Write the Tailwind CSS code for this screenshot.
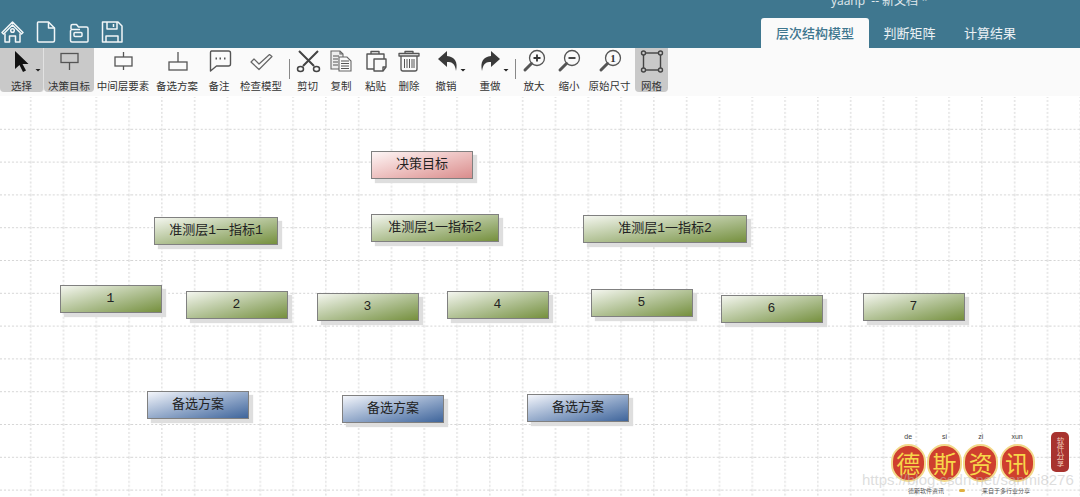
<!DOCTYPE html>
<html lang="zh-CN">
<head>
<meta charset="UTF-8">
<title>yaahp</title>
<script src="https://cdn.jsdelivr.net/npm/@tailwindcss/browser@4"></script>
</head>
<body class="w-[1080px] h-[497px] overflow-hidden bg-white font-['Noto_Sans_CJK_SC',sans-serif] text-[#333]">

<!-- Title bar -->
<header class="relative h-[48px] bg-[#3f778f] flex items-end overflow-hidden">
  <div class="absolute top-[-7px] left-[831px] text-[12px] leading-[16px] text-white/85 whitespace-pre font-['Open_Sans','Noto_Sans_CJK_SC',sans-serif]">yaahp  -- 新文档 *</div>

  <div class="flex items-center h-[30px] mb-0 pl-[1px]">
    <svg class="w-[24px] h-[24px] mt-[-2px]" viewBox="0 0 24 24" fill="none" stroke="#f2f6f8" stroke-width="1.5" stroke-linejoin="round" stroke-linecap="round">
      <path d="M1 12.5 11.5 2 22 12.5 20.5 14 11.5 5 2.5 14Z"/>
      <path d="M4 14v8h4.5v-6h6v6H19v-8"/>
      <circle cx="11.5" cy="10.5" r="1.8"/>
    </svg>
    <svg class="w-[20px] h-[22px] ml-[11px] mt-[-2px]" viewBox="0 0 20 22" fill="none" stroke="#f2f6f8" stroke-width="1.5" stroke-linejoin="round">
      <path d="M2 1h10.5L18.5 7v12.5a1.5 1.5 0 0 1-1.500 1.500H3a1.500 1.500 0 0 1-1.500-1.500V2.500A1.500 1.500 0 0 1 2 1Z"/>
      <path d="M12.500 1v6h6"/>
    </svg>
    <svg class="w-[22px] h-[20px] ml-[13px] mt-[-1px]" viewBox="0 0 22 20" fill="none" stroke="#f2f6f8" stroke-width="1.500" stroke-linejoin="round">
      <path d="M2 6V3a1.500 1.500 0 0 1 1.500-1.500h4l2 2.500h8a1.500 1.500 0 0 1 1.500 1.500V18a1 1 0 0 1-1 1H3a1.500 1.500 0 0 1-1.500-1.500V8A1.500 1.500 0 0 1 3 6.500h8"/>
      <rect x="5" y="9.500" width="8" height="4" rx="1"/>
    </svg>
    <svg class="w-[22px] h-[22px] ml-[10px] mt-[-2px]" viewBox="0 0 22 22" fill="none" stroke="#f2f6f8" stroke-width="1.500" stroke-linejoin="round">
      <path d="M1.500 1h15.500l4 4v16H1.500Z"/>
      <path d="M6 1v7h10V1M12.500 3v3"/>
      <path d="M5 21v-6h12v6"/>
    </svg>
  </div>

  <nav class="absolute left-[761px] bottom-0 flex items-stretch h-[30px] text-[13px]">
    <div class="w-[108px] flex items-center justify-center rounded-t-[3px] bg-[#fafafa] text-[#3f778f] font-medium">层次结构模型</div>
    <div class="w-[81px] flex items-center justify-center text-white/90">判断矩阵</div>
    <div class="w-[80px] flex items-center justify-center text-white/90">计算结果</div>
  </nav>
</header>

<!-- Toolbar -->
<div class="flex items-start h-[48px] bg-[#fafafa] text-[10.5px] leading-[14px]">

  <div class="w-[44px] h-[44px] flex flex-col items-center bg-[#c9c9c9] rounded-b-sm border-r border-[#e2e2e2]">
    <svg class="w-[44px] h-[29px] shrink-0" viewBox="0 0 44 29"><path d="M15 3v18l4.500-4 3.500 7 3-1.500-3.500-6.500h6Z" fill="#111"/><path d="M35.500 21h5l-2.500 2.500Z" fill="#222"/></svg>
    <span class="mt-[2px]">选择</span>
  </div>

  <div class="w-[50px] h-[44px] flex flex-col items-center bg-[#c9c9c9] rounded-b-sm">
    <svg class="w-[32px] h-[29px] shrink-0" viewBox="0 0 32 29" fill="none" stroke="#555" stroke-width="1.300"><rect x="8" y="5.500" width="17" height="9"/><path d="M16.500 14.500V22"/></svg>
    <span class="mt-[2px]">决策目标</span>
  </div>

  <div class="w-[58px] h-[44px] flex flex-col items-center">
    <svg class="w-[32px] h-[29px] shrink-0" viewBox="0 0 32 29" fill="none" stroke="#555" stroke-width="1.300"><rect x="8" y="9" width="17" height="9"/><path d="M16.500 4v5M16.500 18v4"/></svg>
    <span class="mt-[2px]">中间层要素</span>
  </div>

  <div class="w-[50px] h-[44px] flex flex-col items-center">
    <svg class="w-[32px] h-[29px] shrink-0" viewBox="0 0 32 29" fill="none" stroke="#555" stroke-width="1.300"><rect x="8" y="14" width="18" height="8"/><path d="M17 4v10"/></svg>
    <span class="mt-[2px]">备选方案</span>
  </div>

  <div class="w-[34px] h-[44px] flex flex-col items-center">
    <svg class="w-[32px] h-[29px] shrink-0" viewBox="0 0 32 29" fill="none" stroke="#555" stroke-width="1.400" stroke-linejoin="round"><path d="M8.500 3h17a2 2 0 0 1 2 2v11a2 2 0 0 1-2 2h-12l-6 5V4.500A1.500 1.500 0 0 1 8.500 3Z"/><path d="M12.500 10.500h1.500M16.500 10.500h1.500M21 10.500h1.500" stroke-width="2"/></svg>
    <span class="mt-[2px]">备注</span>
  </div>

  <div class="w-[50px] h-[44px] flex flex-col items-center">
    <svg class="w-[32px] h-[29px] shrink-0" viewBox="0 0 32 29" fill="none" stroke="#666" stroke-width="1.200" stroke-linejoin="round"><path d="M6 14l3-3 5 5 10.500-9.500 2.500 2L14 21.500Z"/></svg>
    <span class="mt-[2px]">检查模型</span>
  </div>

  <div class="w-[6px] flex justify-center pt-[11px]"><div class="w-px h-[20px] bg-[#888]"></div></div>

  <div class="w-[31px] h-[44px] flex flex-col items-center">
    <svg class="w-[32px] h-[29px] shrink-0" viewBox="0 0 32 29" fill="none" stroke="#444" stroke-width="1.500"><path d="M7 3l15 15M26 3 11 18" stroke-width="2"/><ellipse cx="8.500" cy="21" rx="3" ry="2.500"/><ellipse cx="24.500" cy="21" rx="3" ry="2.500"/></svg>
    <span class="mt-[2px]">剪切</span>
  </div>

  <div class="w-[36px] h-[44px] flex flex-col items-center">
    <svg class="w-[32px] h-[29px] shrink-0" viewBox="0 0 32 29" fill="none" stroke="#666" stroke-width="1.100"><path d="M6 3h9l3 3v15H6ZM15 3v3h3" fill="#eee"/><path d="M14 9h8l4 4v10H14Z" fill="#fafafa"/><path d="M8 8h6M8 11h5M8 14h5M8 17h5M16 13h8M16 15.500h8M16 18h8M16 20.500h8" stroke="#555"/></svg>
    <span class="mt-[2px]">复制</span>
  </div>

  <div class="w-[33px] h-[44px] flex flex-col items-center">
    <svg class="w-[32px] h-[29px] shrink-0" viewBox="0 0 32 29" fill="none" stroke="#555" stroke-width="1.400" stroke-linejoin="round"><path d="M10 6h14v5M10 6H7v15h7"/><path d="M11 6V3.500h8V6" /><path d="M14 11h12v8l-3 4h-9Z" fill="#fafafa"/><path d="M26 19h-3v4"/></svg>
    <span class="mt-[2px]">粘贴</span>
  </div>

  <div class="w-[34px] h-[44px] flex flex-col items-center">
    <svg class="w-[32px] h-[29px] shrink-0" viewBox="0 0 32 29" fill="none" stroke="#555" stroke-width="1.300" stroke-linejoin="round"><path d="M6 5.500h20v2.500H6ZM12 5.500V3.500h8v2"/><path d="M8 8v13a2 2 0 0 0 2 2h12a2 2 0 0 0 2-2V8"/><path d="M11.500 11v9M14 11v9M16.500 11v9M19 11v9M21 11v9" stroke-width="1"/></svg>
    <span class="mt-[2px]">删除</span>
  </div>

  <div class="w-[40px] h-[44px] flex flex-col items-center">
    <svg class="w-[40px] h-[29px] shrink-0" viewBox="0 0 40 29"><path d="M21 3l-9 8 9 8v-5c5 0 8 1.500 9 9 2-9-1-14-9-15Z" fill="#3a3a3a"/><path d="M34.500 21h5L37 23.500Z" fill="#222"/></svg>
    <span class="mt-[2px]">撤销</span>
  </div>

  <div class="w-[48px] h-[44px] flex flex-col items-center">
    <svg class="w-[48px] h-[29px] shrink-0" viewBox="0 0 48 29"><path d="M25 3l9 8-9 8v-5c-5 0-8 1.500-9 9-2-9 1-14 9-15Z" fill="#3a3a3a"/><path d="M37.500 21h5L40 23.500Z" fill="#222"/></svg>
    <span class="mt-[2px]">重做</span>
  </div>

  <div class="w-[2px] flex justify-center pt-[11px]"><div class="w-px h-[20px] bg-[#888]"></div></div>

  <div class="w-[36px] h-[44px] flex flex-col items-center">
    <svg class="w-[32px] h-[29px] shrink-0" viewBox="0 0 32 29" fill="none" stroke="#555" stroke-width="1.300"><circle cx="19" cy="10" r="7.500"/><path d="M13.500 15.500 7 22" stroke-width="3" stroke-linecap="round"/><path d="M15.500 10h7M19 6.500v7" stroke="#333" stroke-width="1.800"/></svg>
    <span class="mt-[2px]">放大</span>
  </div>

  <div class="w-[34px] h-[44px] flex flex-col items-center">
    <svg class="w-[32px] h-[29px] shrink-0" viewBox="0 0 32 29" fill="none" stroke="#555" stroke-width="1.300"><circle cx="19" cy="10" r="7.500"/><path d="M13.500 15.500 7 22" stroke-width="3" stroke-linecap="round"/><path d="M15.500 10h7" stroke="#333" stroke-width="1.800"/></svg>
    <span class="mt-[2px]">缩小</span>
  </div>

  <div class="w-[47px] h-[44px] flex flex-col items-center">
    <svg class="w-[32px] h-[29px] shrink-0" viewBox="0 0 32 29" fill="none" stroke="#555" stroke-width="1.300"><circle cx="19" cy="10" r="7.500"/><path d="M13.500 15.500 7 22" stroke-width="3" stroke-linecap="round"/><text x="19" y="14" text-anchor="middle" font-size="11" font-family="Liberation Serif" fill="#333" stroke="none" font-weight="700">1</text></svg>
    <span class="mt-[2px]">原始尺寸</span>
  </div>

  <div class="w-[33px] h-[44px] ml-[2px] flex flex-col items-center bg-[#c9c9c9] rounded-b-sm">
    <svg class="w-[32px] h-[29px] shrink-0" viewBox="0 0 32 29" fill="none" stroke="#444" stroke-width="1.400"><rect x="7.500" y="5" width="17" height="17"/><circle cx="7.500" cy="5" r="2" fill="#c9c9c9"/><circle cx="24.500" cy="5" r="2" fill="#c9c9c9"/><circle cx="7.500" cy="22" r="2" fill="#c9c9c9"/><circle cx="24.500" cy="22" r="2" fill="#c9c9c9"/></svg>
    <span class="mt-[2px]">网格</span>
  </div>
</div>

<!-- Model canvas -->
<main class="relative h-[401px] overflow-hidden font-['Liberation_Mono','Noto_Sans_CJK_SC',monospace] text-[13px] text-[#222]">
  <svg class="absolute inset-0 w-full h-full" xmlns="http://www.w3.org/2000/svg">
    <defs>
      <pattern id="grid" width="32.8" height="32.8" patternUnits="userSpaceOnUse">
        <path d="M30.700 0V32.800M0 0.500H32.800" stroke="#d4d4d4" stroke-width="1" stroke-dasharray="2 2" fill="none"/>
      </pattern>
    </defs>
    <rect y="1" width="1080" height="400" fill="url(#grid)"/>
  </svg>

  <div class="absolute left-[371px] top-[55px] w-[102px] h-[28px] flex items-center justify-center border border-[#808080] shadow-[4px_4px_1px_#dedede] bg-gradient-to-br from-[#fdf6f6] to-[#d98d8d]">决策目标</div>

  <div class="absolute left-[154px] top-[121px] w-[124px] h-[28px] flex items-center justify-center border border-[#808080] shadow-[4px_4px_1px_#dedede] bg-gradient-to-br from-[#f4f6ef] to-[#76903c]">准测层1一指标1</div>
  <div class="absolute left-[371px] top-[118px] w-[128px] h-[28px] flex items-center justify-center border border-[#808080] shadow-[4px_4px_1px_#dedede] bg-gradient-to-br from-[#f4f6ef] to-[#76903c]">准测层1一指标2</div>
  <div class="absolute left-[583px] top-[119px] w-[164px] h-[28px] flex items-center justify-center border border-[#808080] shadow-[4px_4px_1px_#dedede] bg-gradient-to-br from-[#f4f6ef] to-[#76903c]">准测层1一指标2</div>

  <div class="absolute left-[60px] top-[189px] w-[102px] h-[28px] pr-[1px] flex items-center justify-center border border-[#808080] shadow-[4px_4px_1px_#dedede] bg-gradient-to-br from-[#f4f6ef] to-[#76903c]">1</div>
  <div class="absolute left-[186px] top-[195px] w-[102px] h-[28px] pr-[1px] flex items-center justify-center border border-[#808080] shadow-[4px_4px_1px_#dedede] bg-gradient-to-br from-[#f4f6ef] to-[#76903c]">2</div>
  <div class="absolute left-[317px] top-[197px] w-[102px] h-[28px] pr-[1px] flex items-center justify-center border border-[#808080] shadow-[4px_4px_1px_#dedede] bg-gradient-to-br from-[#f4f6ef] to-[#76903c]">3</div>
  <div class="absolute left-[447px] top-[195px] w-[102px] h-[28px] pr-[1px] flex items-center justify-center border border-[#808080] shadow-[4px_4px_1px_#dedede] bg-gradient-to-br from-[#f4f6ef] to-[#76903c]">4</div>
  <div class="absolute left-[591px] top-[193px] w-[102px] h-[28px] pr-[1px] flex items-center justify-center border border-[#808080] shadow-[4px_4px_1px_#dedede] bg-gradient-to-br from-[#f4f6ef] to-[#76903c]">5</div>
  <div class="absolute left-[721px] top-[199px] w-[102px] h-[28px] pr-[1px] flex items-center justify-center border border-[#808080] shadow-[4px_4px_1px_#dedede] bg-gradient-to-br from-[#f4f6ef] to-[#76903c]">6</div>
  <div class="absolute left-[863px] top-[197px] w-[102px] h-[28px] pr-[1px] flex items-center justify-center border border-[#808080] shadow-[4px_4px_1px_#dedede] bg-gradient-to-br from-[#f4f6ef] to-[#76903c]">7</div>

  <div class="absolute left-[147px] top-[295px] w-[102px] h-[28px] flex items-center justify-center border border-[#808080] shadow-[4px_4px_1px_#dedede] bg-gradient-to-br from-[#f4f6fb] to-[#3f659b]">备选方案</div>
  <div class="absolute left-[342px] top-[299px] w-[102px] h-[28px] flex items-center justify-center border border-[#808080] shadow-[4px_4px_1px_#dedede] bg-gradient-to-br from-[#f4f6fb] to-[#3f659b]">备选方案</div>
  <div class="absolute left-[527px] top-[298px] w-[102px] h-[28px] flex items-center justify-center border border-[#808080] shadow-[4px_4px_1px_#dedede] bg-gradient-to-br from-[#f4f6fb] to-[#3f659b]">备选方案</div>

  <!-- Logo overlay -->
  <div class="absolute left-[890px] top-[336px] w-[146px] flex font-['Noto_Sans_CJK_SC',sans-serif]">
    <div class="w-[36.300px] flex flex-col items-center"><span class="text-[7px] leading-[9px] text-[#444] font-['Liberation_Sans',sans-serif]">de</span><span class="mt-[3px] w-[35px] h-[38px] rounded-full bg-[#cf3f2e] border-2 border-[#f3d98a] flex items-center justify-center text-[#f7d64a] text-[24px] leading-none">德</span></div>
    <div class="w-[36.300px] flex flex-col items-center"><span class="text-[7px] leading-[9px] text-[#444] font-['Liberation_Sans',sans-serif]">si</span><span class="mt-[3px] w-[35px] h-[38px] rounded-full bg-[#cf3f2e] border-2 border-[#f3d98a] flex items-center justify-center text-[#f7d64a] text-[24px] leading-none">斯</span></div>
    <div class="w-[36.300px] flex flex-col items-center"><span class="text-[7px] leading-[9px] text-[#444] font-['Liberation_Sans',sans-serif]">zi</span><span class="mt-[3px] w-[35px] h-[38px] rounded-full bg-[#cf3f2e] border-2 border-[#f3d98a] flex items-center justify-center text-[#f7d64a] text-[24px] leading-none">资</span></div>
    <div class="w-[36.300px] flex flex-col items-center"><span class="text-[7px] leading-[9px] text-[#444] font-['Liberation_Sans',sans-serif]">xun</span><span class="mt-[3px] w-[35px] h-[38px] rounded-full bg-[#cf3f2e] border-2 border-[#f3d98a] flex items-center justify-center text-[#f7d64a] text-[24px] leading-none">讯</span></div>
  </div>
  <div class="absolute left-[1051px] top-[336px] w-[18px] h-[40px] rounded-[5px] bg-[#a8332f] text-[#f1c9b8] text-[7.5px] leading-[8px] flex items-center justify-center text-center font-['Noto_Sans_CJK_SC',sans-serif] [writing-mode:vertical-rl] [text-orientation:upright]">软件分享</div>
  <div class="absolute left-[862px] top-[375px] text-[15px] leading-[18px] text-[#bbbbbb]/50 font-['Liberation_Sans',sans-serif]">https://blog.csdn.net/sanmi8276</div>
  <div class="absolute left-[908px] top-[390px] text-[6px] leading-[9px] text-[#555] font-['Noto_Sans_CJK_SC',sans-serif]">德斯软件资讯</div>
  <div class="absolute left-[959px] top-[393px] w-[6px] h-[3px] rounded-full bg-[#e0b040]"></div>
  <div class="absolute left-[982px] top-[390px] text-[6px] leading-[9px] text-[#555] font-['Noto_Sans_CJK_SC',sans-serif]">来自于多行业分享</div>
</main>
</body>
</html>
